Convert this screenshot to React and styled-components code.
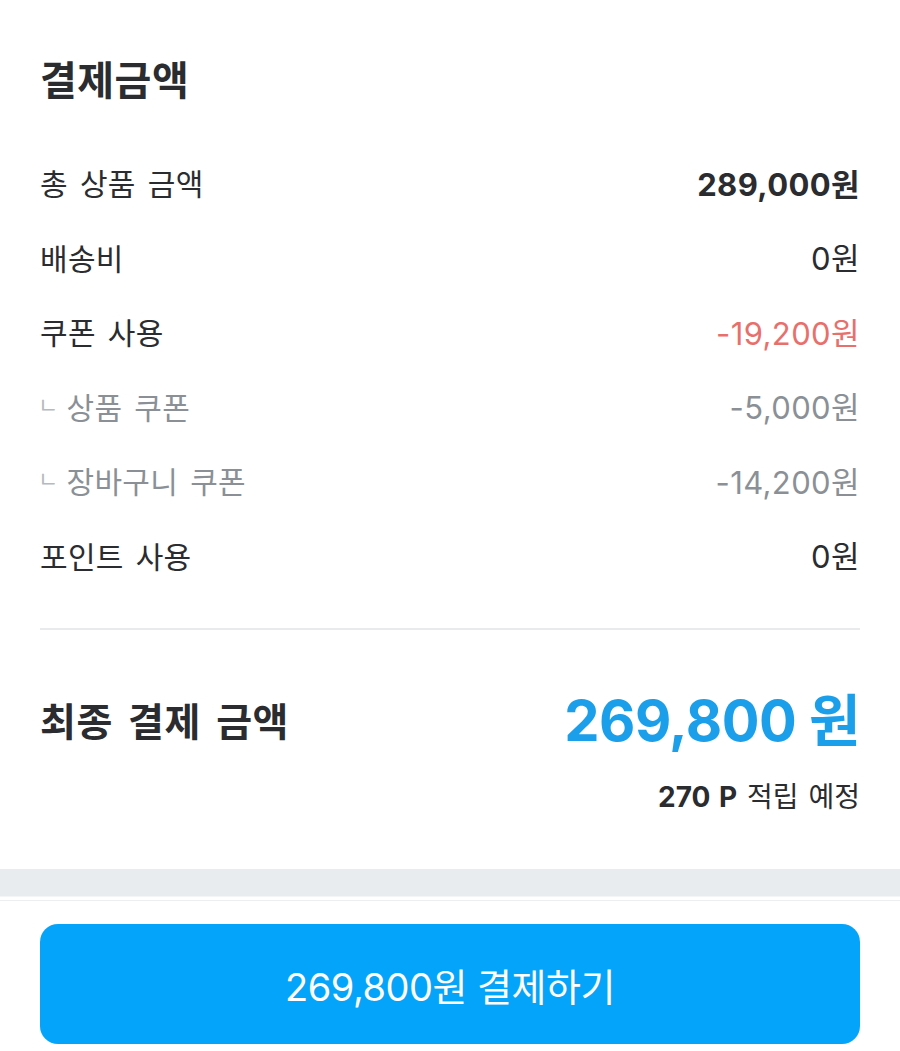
import React from 'react';
import styled, { createGlobalStyle } from 'styled-components';

const GlobalStyle = createGlobalStyle`
    body {
        margin: 0;
        background: #ffffff;
        font-family: Inter, "Noto Sans CJK KR", sans-serif;
        color: #222426;
    }
`;

const rows = [
    { label: '총 상품 금액', value: '289,000원', strong: true },
    { label: '배송비', value: '0원' },
    { label: '쿠폰 사용', value: '-19,200원', tone: 'red' },
    { label: '상품 쿠폰', value: '-5,000원', sub: true },
    { label: '장바구니 쿠폰', value: '-14,200원', sub: true },
    { label: '포인트 사용', value: '0원' },
];

const App = () => {
    return (
        <Page>
            <GlobalStyle />
            <Section>
                <Title>결제금액</Title>
                <List>
                    {rows.map((row) => (
                        <Row key={row.label}>
                            <Label $sub={row.sub}>
                                {row.sub && <Branch>ㄴ</Branch>}
                                {row.label}
                            </Label>
                            <Value $strong={row.strong} $tone={row.sub ? 'gray' : row.tone}>
                                {row.value}
                            </Value>
                        </Row>
                    ))}
                </List>
                <Divider />
                <TotalRow>
                    <TotalLabel>최종 결제 금액</TotalLabel>
                    <TotalValue>269,800 원</TotalValue>
                </TotalRow>
                <Points>
                    <b>270 P</b> 적립 예정
                </Points>
            </Section>
            <Band />
            <Footer>
                <PayButton type="button">269,800원 결제하기</PayButton>
            </Footer>
        </Page>
    );
};

const Page = styled.div`
    width: 900px;
    min-height: 1051px;
    background: #fff;
`;

const Section = styled.section`
    padding: 53px 40px 52px;
`;

const Title = styled.h2`
    margin: 0;
    font-family: "Noto Sans CJK KR", sans-serif;
    font-size: 40px;
    font-weight: 700;
    line-height: 50px;
    color: #2a2c2f;
    letter-spacing: 0.5px;
`;

const List = styled.div`
    margin-top: 42px;
    display: flex;
    flex-direction: column;
`;

const Row = styled.div`
    height: 74.5px;
    display: flex;
    align-items: center;
    justify-content: space-between;
`;

const Label = styled.span`
    display: flex;
    align-items: center;
    font-family: "Noto Sans CJK KR", sans-serif;
    font-size: 30px;
    color: ${(p) => (p.$sub ? '#8a9096' : '#2a2c2f')};
    word-spacing: 5px;
    letter-spacing: 0.3px;
`;

const Branch = styled.span`
    font-size: 22px;
    color: #b6babe;
    margin-right: 8px;
    margin-left: -2px;
    transform: translateY(-3px);
`;

const toneColor = {
    red: '#e8706c',
    gray: '#8a9096',
};

const Value = styled.span`
    font-size: 31px;
    font-weight: ${(p) => (p.$strong ? 700 : 400)};
    color: ${(p) => toneColor[p.$tone] || '#2a2c2f'};
    letter-spacing: 0.4px;
`;

const Divider = styled.hr`
    margin: 36px 0 0;
    border: none;
    height: 2px;
    background: #e8eaec;
`;

const TotalRow = styled.div`
    margin-top: 54px;
    height: 70px;
    display: flex;
    align-items: center;
    justify-content: space-between;
`;

const TotalLabel = styled.span`
    font-family: "Noto Sans CJK KR", sans-serif;
    font-size: 39px;
    font-weight: 700;
    color: #2a2c2f;
    word-spacing: 6px;
    letter-spacing: 0.5px;
`;

const TotalValue = styled.span`
    font-size: 56px;
    font-weight: 700;
    color: #1b9feb;
    letter-spacing: -0.5px;
    transform: translateY(-3px);
`;

const Points = styled.div`
    margin-top: 23px;
    text-align: right;
    font-size: 28px;
    line-height: 40px;
    color: #2a2c2f;
    word-spacing: 2px;

    b {
        font-weight: 700;
    }
`;

const Band = styled.div`
    height: 27px;
    background: #e9ecef;
    border-bottom: 1px solid #f4f5f6;
    box-shadow: 0 3px 0 #fff, 0 4px 0 #eceef0;
`;

const Footer = styled.div`
    padding: 27px 40px 0;
`;

const PayButton = styled.button`
    width: 100%;
    height: 120px;
    border: none;
    border-radius: 18px;
    background: #05a4fb;
    color: #fff;
    font-family: Inter, "Noto Sans CJK KR", sans-serif;
    font-size: 38px;
    font-weight: 400;
    letter-spacing: -0.5px;
`;

export default App;
